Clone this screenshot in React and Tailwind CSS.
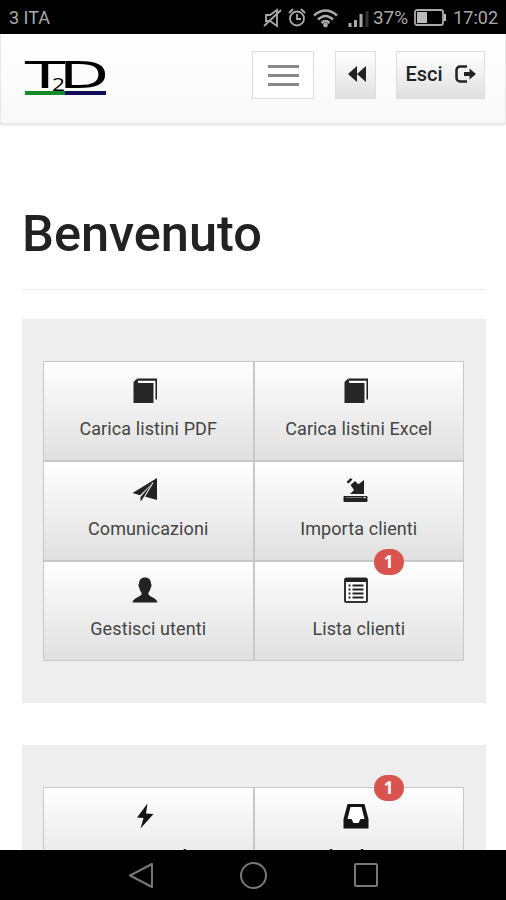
const icons = {
  book: (
    <svg className="size-[26px]" viewBox="0 0 26 26" aria-hidden="true">
      <path d="M5 1.500h20v21h-2V5H7z" fill="#222" />
      <path d="M4.500 2L1.500 5v21h20V6H5.500L8 4z" fill="#262626" />
      <path d="M6 4.400h16.700V23" fill="none" stroke="#fff" strokeWidth="1.500" />
    </svg>
  ),
  send: (
    <svg className="size-[26px]" viewBox="0 0 26 26" fill="#222" aria-hidden="true">
      <path d="M25 1L.5 16l7.500 2.300L21 5.500 8.500 20v4.500l4-5L25 23z" />
      <path d="M21 5.500L10 24" stroke="#ddd" strokeWidth="1.200" />
    </svg>
  ),
  save: (
    <svg className="size-[26px]" viewBox="0 0 26 26" fill="#222" aria-hidden="true">
      <path d="M3.500 5l4-4 2 1.500-4 4zM7.500 8l4.500-4 3 3 1.500-.5L21 3v14H7l4-4z" />
      <rect x=".5" y="19" width="24" height="6" rx="1" />
      <path d="M3 20.500h16" stroke="#777" strokeWidth="1" />
      <path d="M20.500 20.500h2" stroke="#fff" strokeWidth="1.300" />
    </svg>
  ),
  user: (
    <svg className="size-[26px]" viewBox="0 0 26 26" fill="#222" aria-hidden="true">
      <path d="M13 .5c4 0 6 2.500 6 6.500 1 .5.6 2-.2 3.500-.5 2.500-1.300 4-2.300 5v2c0 1.500 8.800 4 9 8H.5c.2-4 9-6.500 9-8v-2c-1-1-1.800-2.500-2.300-5C6.400 9 6 7.500 7 7c0-4 2-6.500 6-6.500z" />
    </svg>
  ),
  list: (
    <svg className="size-[26px]" viewBox="0 0 26 26" aria-hidden="true">
      <rect x="2" y="1.500" width="22" height="23.500" rx="1.500" fill="#fff" stroke="#333" strokeWidth="2" />
      <path d="M2 1h22v4H2z" fill="#222" />
      <path d="M9.500 8.500h11M9.500 12.500h11M9.500 16.500h11M9.500 20.500h11M5.500 8.500h2M5.500 12.500h2M5.500 16.500h2M5.500 20.500h2" stroke="#222" strokeWidth="1.800" />
    </svg>
  ),
  bolt: (
    <svg className="size-[26px]" viewBox="0 0 26 26" fill="#151515" aria-hidden="true">
      <path d="M15.500.5L5 14.500l6.500.5L8.500 25.500 21.500 11l-7.500-.5z" />
    </svg>
  ),
  inbox: (
    <svg className="size-[26px]" viewBox="0 0 26 26" aria-hidden="true">
      <path d="M4.500 1h17L25.500 16v9.500H.5V16z" fill="#151515" />
      <path d="M7.500 4h11L21.500 16H17.500l-2 4h-5l-2-4H4.500z" fill="#fff" />
    </svg>
  ),
};

const mainTiles = [
  { icon: "book", label: "Carica listini PDF" },
  { icon: "book", label: "Carica listini Excel" },
  { icon: "send", label: "Comunicazioni" },
  { icon: "save", label: "Importa clienti" },
  { icon: "user", label: "Gestisci utenti" },
  { icon: "list", label: "Lista clienti", badge: 1 },
];

const orderTiles = [
  { icon: "bolt", label: "Gestisci ordini" },
  { icon: "inbox", label: "Consulta documenti", badge: 1 },
];

function Tile({ icon, label, badge, strong }) {
  return (
    <button className="relative flex h-[100px] flex-col items-center border border-[#c8c8c8] bg-linear-to-b from-white to-[#e0e0e0] pt-[15px] pr-1.5">
      {icons[icon]}
      <span
        className={`ml-1.5 text-[18px] leading-[26px] tracking-[0.1px] whitespace-nowrap ${
          strong ? "mt-[15px] font-medium text-[#111]" : "mt-[13px] text-[#444]"
        }`}
      >
        {label}
      </span>
      {badge && (
        <span className="absolute -top-[13px] left-[119px] flex h-[26px] w-[30px] items-center justify-center rounded-full bg-[#d9534f] font-['Open_Sans',sans-serif] text-[17px] font-bold text-white">
          {badge}
        </span>
      )}
    </button>
  );
}

function Panel({ tiles, strong }) {
  return (
    <section className="bg-[#eee] py-[42px] pr-[22px] pl-[21px]">
      <div className="grid grid-cols-2">
        {tiles.map((t) => (
          <Tile key={t.label} strong={strong} {...t} />
        ))}
      </div>
    </section>
  );
}

function StatusBar() {
  return (
    <div className="flex h-[34px] shrink-0 items-center bg-black pt-px pr-2 pl-[9px] text-[18px] text-[#a8a8a8]">
      <span>3 ITA</span>
      <svg className="ml-auto h-[22px] w-[108px]" viewBox="0 0 108 22" fill="none" stroke="#aaa" strokeWidth="1.800" aria-hidden="true">
        <path d="M3 8h4l7-5v16l-7-5H3zM1 19L18 3" />
        <circle cx="34" cy="11.500" r="7" />
        <path d="M34 7v5h4M26 6l4-4M42 6l-4-4" />
        <path d="M51 8.500q11.500-10 23 0M55 12.500q7.500-7 15 0M58.500 16q4-4 8 0" strokeWidth="2.500" />
        <circle cx="62.500" cy="18" r="1.500" fill="#aaa" />
        <path d="M87 20v-4M92.500 20v-7M98 20V7" strokeWidth="3" />
        <path d="M104 20V4" stroke="#333" strokeWidth="3" />
      </svg>
      <span className="ml-0.5 pt-px text-[19px]">37%</span>
      <svg className="ml-1.5 h-[18px] w-[33px]" viewBox="0 0 33 18" aria-hidden="true">
        <rect x="1" y="1" width="28" height="15" rx="2" fill="none" stroke="#aaa" strokeWidth="1.800" />
        <path d="M3 3h10v11H3zM30 5h2v7h-2z" fill="#bbb" />
      </svg>
      <span className="ml-1.5">17:02</span>
    </div>
  );
}

function Logo() {
  return (
    <svg className="mt-[6px] h-[40px] w-[84px] overflow-visible" viewBox="0 0 84 40" fontFamily="DejaVu Sans, sans-serif" aria-hidden="true">
      <text x="1" y="31" fontSize="38" textLength="40" lengthAdjust="spacingAndGlyphs">T</text>
      <text x="35" y="31" fontSize="38" textLength="50" lengthAdjust="spacingAndGlyphs">D</text>
      <text x="28" y="34" fontFamily="Open Sans" fontSize="19" textLength="13" lengthAdjust="spacingAndGlyphs">2</text>
      <path d="M1 36h40" stroke="#168b2a" strokeWidth="4" />
      <path d="M41 36h41" stroke="#120b58" strokeWidth="4" />
    </svg>
  );
}

function Header() {
  return (
    <header className="flex h-[90px] shrink-0 items-start border border-t-0 border-[#e8e8e8] bg-linear-to-b from-white to-[#f8f8f8] pt-[17px] pr-[20px] pl-[23px] shadow-sm">
      <Logo />
      <button className="ml-auto flex h-[48px] w-[62px] flex-col items-center justify-center gap-[6px] border border-[#ddd] bg-white" aria-label="Menu">
        <span className="h-[3px] w-[31px] bg-[#888]" />
        <span className="h-[3px] w-[31px] bg-[#888]" />
        <span className="h-[3px] w-[31px] bg-[#888]" />
      </button>
      <button className="ml-[21px] flex h-[48px] w-[41px] items-center justify-center border border-[#ddd] bg-linear-to-b from-white to-[#e0e0e0] pb-[3px] pl-[3px]" aria-label="Indietro">
        <svg className="h-[16px] w-[18px]" viewBox="0 0 18 16" fill="#222" aria-hidden="true">
          <path d="M9 0v16L0 8zM18 0v16L9 8z" />
        </svg>
      </button>
      <button className="ml-5 flex h-[48px] w-[89px] items-center justify-center gap-3 border border-[#ddd] bg-linear-to-b from-white to-[#e0e0e0] pb-[3px] text-[20px] font-medium text-[#222]">
        Esci
        <svg className="h-[18px] w-[21px]" viewBox="0 0 21 18" aria-hidden="true">
          <path d="M12 1.500H5A3.500 3.500 0 0 0 1.500 5v8A3.500 3.500 0 0 0 5 16.500h7" fill="none" stroke="#222" strokeWidth="2.500" />
          <path d="M9 7h5.500V3.500l6.500 5.500-6.500 5.500V11H9z" fill="#222" />
        </svg>
      </button>
    </header>
  );
}

export default function App() {
  return (
    <div className="flex h-[900px] w-[506px] flex-col overflow-hidden bg-white font-[Roboto,sans-serif]">
      <StatusBar />
      <Header />
      <main className="min-h-0 flex-1 overflow-hidden pr-[20px] pl-[22px]">
        <h1 className="mt-[80px] text-[50.5px] leading-[60px] font-medium text-[#222]">Benvenuto</h1>
        <hr className="mt-[25px] mb-[29px] border-[#eee]" />
        <Panel tiles={mainTiles} />
        <div className="h-[42px]" />
        <Panel tiles={orderTiles} strong />
      </main>
      <nav className="flex h-[50px] shrink-0 items-center justify-center gap-[86px] bg-black">
        <svg className="size-[27px]" viewBox="0 0 27 27" fill="none" stroke="#777" strokeWidth="2" aria-hidden="true">
          <path d="M25 2v23L3 13.500z" strokeLinejoin="round" />
        </svg>
        <svg className="size-[27px]" viewBox="0 0 27 27" fill="none" stroke="#777" strokeWidth="2" aria-hidden="true">
          <circle cx="13.500" cy="13.500" r="12.500" />
        </svg>
        <svg className="size-[27px]" viewBox="0 0 27 27" fill="none" stroke="#777" strokeWidth="2" aria-hidden="true">
          <rect x="2" y="2" width="22" height="22" rx="1" />
        </svg>
      </nav>
    </div>
  );
}
